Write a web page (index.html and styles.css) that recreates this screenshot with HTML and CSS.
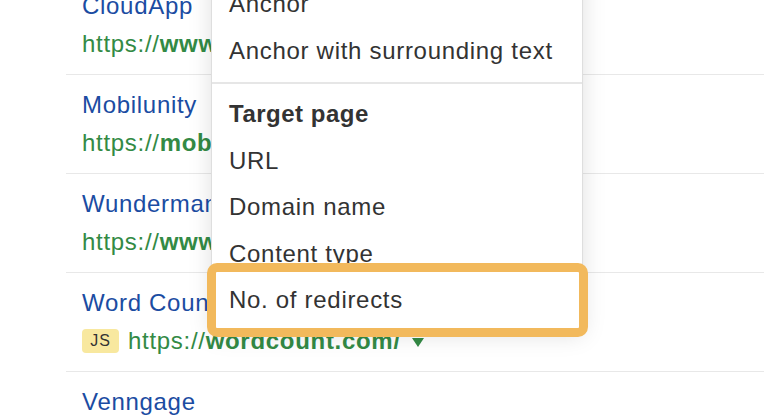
FILE: index.html
```html
<!DOCTYPE html>
<html lang="en">

<head>
  <meta charset="UTF-8">
  <title>Backlinks - columns menu</title>
  <link rel="stylesheet" href="styles.css">
</head>

<body>

  <!-- Results list -->
  <div class="results">
    <div class="result-row">
      <a class="result-title" href="#">CloudApp</a>
      <div class="result-url">https://<b>www.getcloudapp.com/</b></div>
    </div>
    <div class="result-row">
      <a class="result-title" href="#">Mobilunity</a>
      <div class="result-url">https://<b>mobilunity.com/</b></div>
    </div>
    <div class="result-row">
      <a class="result-title" href="#">Wunderman Thompson</a>
      <div class="result-url">https://<b>www.wundermanthompson.com/</b></div>
    </div>
    <div class="result-row">
      <a class="result-title" href="#">Word Counter</a>
      <div class="result-url">
        <span class="js-badge">JS</span>
        <span>https://<b>wordcount.com/</b></span>
        <svg class="url-caret" width="12" height="9" viewBox="0 0 12 9">
          <path d="M0 0 L12 0 L6 9 Z" fill="#338a45" />
        </svg>
      </div>
    </div>
    <div class="result-row">
      <a class="result-title" href="#">Venngage</a>
      <div class="result-url">https://<b>venngage.com/</b></div>
    </div>
  </div>

  <!-- Columns dropdown -->
  <div class="col-menu">
    <div class="col-item">Anchor</div>
    <div class="col-item">Anchor with surrounding text</div>
    <div class="col-divider"></div>
    <div class="col-item col-heading">Target page</div>
    <div class="col-item">URL</div>
    <div class="col-item">Domain name</div>
    <div class="col-item">Content type</div>
    <div class="col-item col-marked">No. of redirects</div>
  </div>

</body>

</html>
```

FILE: styles.css
```css
* {
  box-sizing: border-box;
}

body {
  margin: 0;
  font-family: "Liberation Sans", Arial, sans-serif;
  background: #fff;
  overflow: hidden;
}

.results {
  margin-top: -25px;
  margin-left: 66px;
}

.result-row {
  border-top: 1px solid #e8e8e8;
  padding: 15px 16px 15px 16px;
  font-size: 24px;
  letter-spacing: 0.7px;
}

.result-title {
  display: block;
  line-height: 30px;
  color: #1b4ca2;
  text-decoration: none;
  white-space: nowrap;
}

.result-url {
  display: flex;
  align-items: center;
  margin-top: 8px;
  line-height: 30px;
  color: #338a45;
  white-space: nowrap;
}

.result-url b {
  font-weight: bold;
}

.js-badge {
  display: inline-block;
  width: 37px;
  height: 24px;
  margin-right: 9px;
  border-radius: 4px;
  background: #f8e89f;
  color: #333;
  font-size: 16px;
  letter-spacing: 1px;
  line-height: 24px;
  text-align: center;
}

.url-caret {
  margin-left: 11px;
  margin-top: 2px;
}

.col-menu {
  position: absolute;
  top: -27px;
  left: 211px;
  width: 372px;
  padding: 8px 0;
  background: #fff;
  border: 1px solid #dedede;
  border-top: none;
  box-shadow: 0 2px 22px rgba(0, 0, 0, 0.13);
  font-size: 24px;
  letter-spacing: 0.7px;
  color: #333;
}

.col-item {
  position: relative;
  padding: 8px 17px;
  line-height: 30.5px;
  white-space: nowrap;
}

.col-heading {
  font-weight: bold;
  letter-spacing: 0.5px;
}

.col-divider {
  height: 2px;
  margin: 8px 0 7px;
  background: #e6e6e6;
}

/* highlight frame drawn over the last option */
.col-marked::after {
  content: "";
  position: absolute;
  top: -14px;
  bottom: -13px;
  left: -5px;
  right: -6px;
  border: 9px solid #f2b95c;
  border-radius: 10px;
}
```
